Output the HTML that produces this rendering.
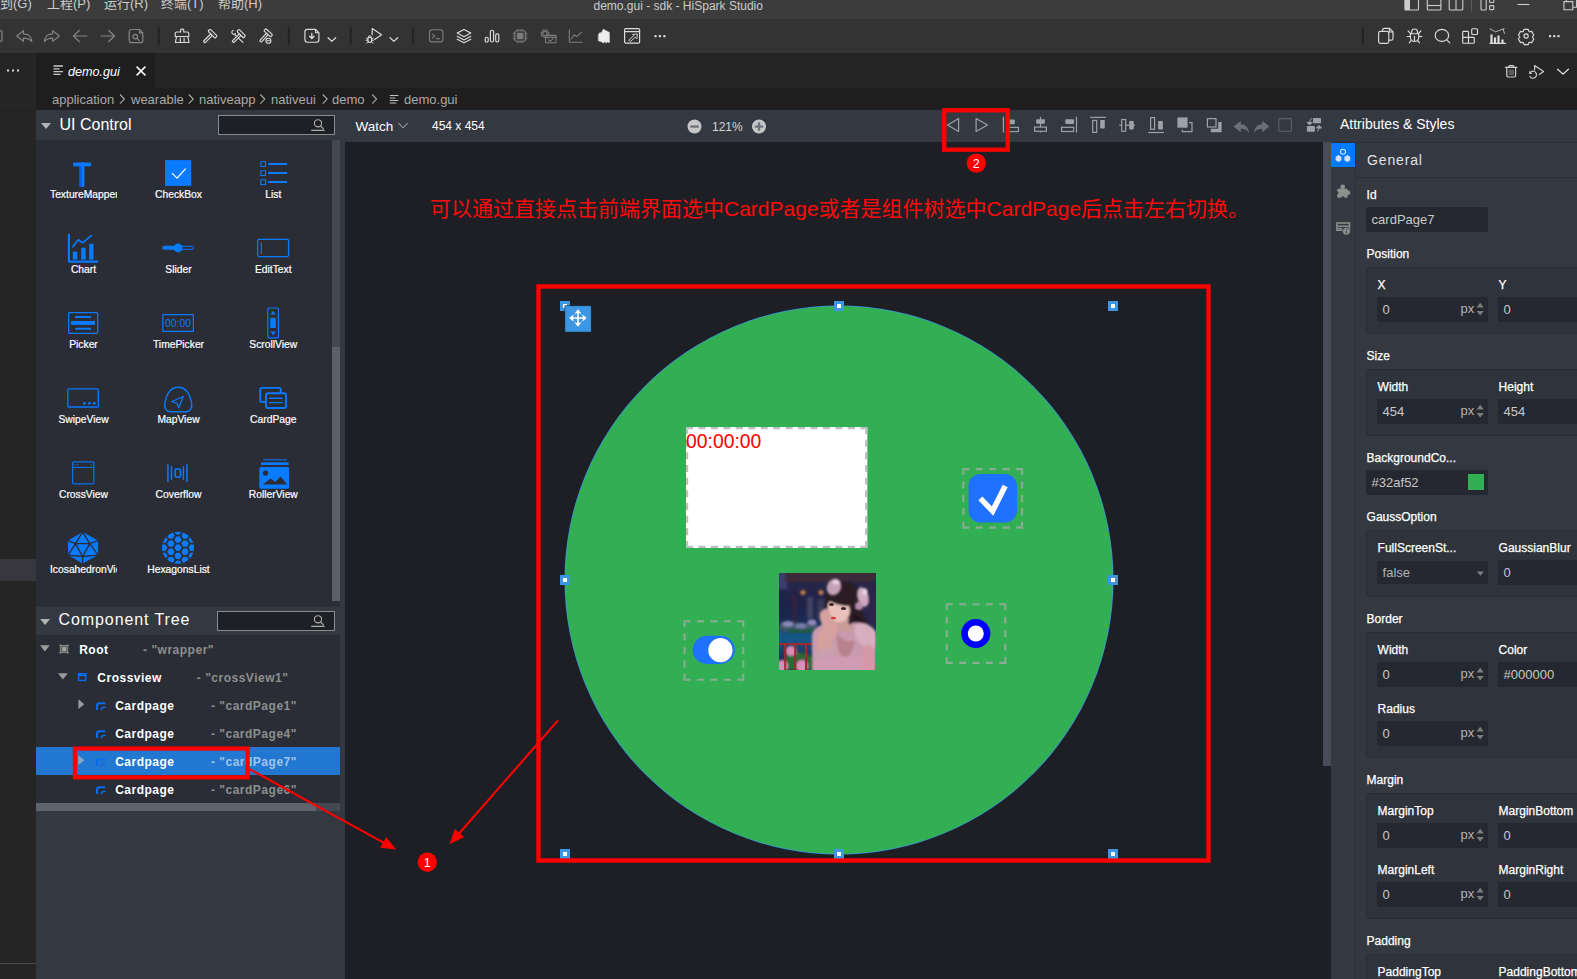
<!DOCTYPE html>
<html lang="zh">
<head>
<meta charset="utf-8">
<title>demo.gui - sdk - HiSpark Studio</title>
<style>
*{box-sizing:border-box;margin:0;padding:0}
html,body{width:1577px;height:979px;overflow:hidden;background:#1d1f24}
body{position:relative;font-family:"Liberation Sans","Noto Sans CJK SC",sans-serif;color:#fff;font-size:12px}
.abs{position:absolute}
#titlebar{left:0;top:0;width:1577px;height:19px;background:#3c3c3c;z-index:2}
#toolbar{left:0;top:18px;width:1577px;height:35px;background:#333333}
#strip{left:0;top:53px;width:36px;height:926px;background:#252526}
#tabbar{left:36px;top:53px;width:1541px;height:35px;background:#252526}
#tab{left:36px;top:53px;width:119px;height:35px;background:#1e1e1e}
#crumbs{left:36px;top:88px;width:1541px;height:22px;background:#1e1e1e}
#edhead{left:36px;top:110px;width:1541px;height:32px;background:#343841}
#leftpanel{left:36px;top:140px;width:304px;height:467px;background:#2a2d35}
#leftgap{left:340px;top:142px;width:5px;height:837px;background:#343841}
#canvas{left:345px;top:142px;width:978px;height:837px;background:#1d1f24}
#cscroll{left:1323px;top:142px;width:8px;height:837px;background:#1d1f24}
#rpanel{left:1331px;top:142px;width:246px;height:837px;background:#343841}
#treehead{left:36px;top:607px;width:304px;height:28px;background:#343841}
#tree{left:36px;top:635px;width:304px;height:168px;background:#2a2d35}
#treebelow{left:36px;top:803px;width:304px;height:176px;background:#343841}
.mtxt{color:#ccc;font-size:13px;top:-7.3px;white-space:nowrap}
.lab{width:67px;height:14px;line-height:14px;overflow:hidden;text-align:center;font-size:10.3px;color:#fff;white-space:nowrap;-webkit-text-stroke:0.2px #fff}
.tn{font-size:12px;font-weight:bold;letter-spacing:.5px;color:#fff;white-space:nowrap;line-height:14px}
.rl{font-size:12px;line-height:14px;color:#fff;white-space:nowrap;-webkit-text-stroke:0.25px #fff}
.gb{width:240px;background:#2f333b;border:1px solid #292c34;border-radius:3px}
.in{background:#252830;border-radius:2px}
.v{font-size:13px;line-height:15px;color:#c9c9c9;white-space:nowrap}
.u{font-size:13px;line-height:15px;color:#b4b4b4}
.dsh{width:60.8px;height:60.6px;border:2px dashed rgba(170,170,170,.72)}
</style>
</head>
<body>

<!-- ===== title bar ===== -->
<div id="titlebar" class="abs">
  <span class="abs mtxt" style="left:-13px">转到(G)</span>
  <span class="abs mtxt" style="left:47px">工程(P)</span>
  <span class="abs mtxt" style="left:104px">运行(R)</span>
  <span class="abs mtxt" style="left:161px">终端(T)</span>
  <span class="abs mtxt" style="left:218px">帮助(H)</span>
  <span class="abs" style="left:593.5px;top:-1px;font-size:12px;color:#ccc;white-space:nowrap">demo.gui - sdk - HiSpark Studio</span>
  <svg class="abs" style="left:1400px;top:0" width="177" height="18" viewBox="1400 0 177 18" fill="none" stroke="#ccc" stroke-width="1.1">
    <rect x="1404.9" y="-4" width="13.6" height="14" rx="1"/><rect x="1405" y="-4" width="5" height="14" fill="#ccc" stroke="none"/>
    <rect x="1427.3" y="-4" width="13.6" height="14" rx="1"/><path d="M1427.3 5.5h13.6"/>
    <rect x="1449.2" y="-4" width="13.6" height="14" rx="1"/><path d="M1456 -4v14"/>
    <path d="M1471.5 0v11.5" stroke="#5a5a5a"/>
    <rect x="1481" y="-4" width="5.2" height="14" rx="1"/><rect x="1489.6" y="-1.5" width="4.2" height="4" rx="0.8"/><rect x="1489.6" y="5.6" width="4.2" height="4" rx="0.8"/>
    <path d="M1517.5 4.5h12"/>
    <path d="M1563.9 1.6h8.9v8.1h-8.9zM1566.4 1.6v-3M1572.8 7.2h3.7v-9"/>
  </svg>
</div>
<!-- ===== main toolbar ===== -->
<div id="toolbar" class="abs">
<svg class="abs" style="left:0;top:0" width="1577" height="35" viewBox="0 18 1577 35" fill="none" stroke-linecap="round" stroke-linejoin="round">
  <g stroke="#858585" stroke-width="1.2">
    <path d="M-4 31.5a5 5 0 0 1 6 0v9a5 5 0 0 1-6 0z"/>
    <path d="M16.8 36l6.6-5.4v3.2c5 0 8.2 3.2 8.4 7.8c-2-2.6-4.6-3.4-8.4-3.4v3.2z"/>
    <path d="M59.3 36l-6.6-5.4v3.2c-5 0-8.2 3.2-8.4 7.8c2-2.6 4.6-3.4 8.4-3.4v3.2z"/>
    <path d="M87 36H73.6M79.5 30.3L73.5 36l6 5.7"/>
    <path d="M101 36h13.4M108.5 30.3l6 5.7l-6 5.7"/>
    <path d="M139.5 29.5h-8a2.3 2.3 0 0 0-2.3 2.3v8.6a2.3 2.3 0 0 0 2.3 2.3h9a2.3 2.3 0 0 0 2.3-2.3v-7.6zM139.5 29.5v3.3h3.3"/>
    <circle cx="135.3" cy="36.6" r="2.3"/><path d="M137 38.4l2.2 2.2"/>
  </g>
  <g stroke="#232323" stroke-width="2" stroke-linecap="butt">
    <path d="M158.8 27.3v17.2M288.9 27.3v17.2M350.7 27.3v17.2M412.9 27.3v17.2M1362.9 27.3v17.2"/>
  </g>
  <g stroke="#dcdcdc" stroke-width="1.15">
    <!-- broom -->
    <path d="M180.7 32v-2.1a0.7 0.7 0 0 1 .7-.7h1.6a.7.7 0 0 1 .7.7v2.1h3.6a1.5 1.5 0 0 1 1.5 1.5v3h-13.6v-3a1.5 1.5 0 0 1 1.5-1.5z"/>
    <path d="M176.5 36.6l-1.1 5.9h13.6l-1.1-5.9M180.3 38v4.5M184.1 38v4.5"/>
    <!-- hammer -->
    <g transform="translate(212.6 33.6) rotate(45)"><rect x="-5" y="-1.5" width="10" height="3" rx="0.9"/><rect x="-1.1" y="1.5" width="2.2" height="10.6" rx="0.9"/></g>
    <!-- hammer + wrench -->
    <path d="M234.4 34.4l8.6 8" stroke-width="1.1"/><path d="M233.3 30.3a2.1 2.1 0 1 0 2.3 3.3" stroke-width="1.1"/>
    <g transform="translate(241.2 33.6) rotate(45)"><rect x="-4.6" y="-1.5" width="9.2" height="3" rx="0.9" fill="#333"/><rect x="-1.1" y="1.5" width="2.2" height="10.4" rx="0.9" fill="#333"/></g>
    <!-- hammer + stop -->
    <g transform="translate(268.2 32.8) rotate(42)"><rect x="-4.6" y="-1.5" width="9.2" height="3" rx="0.9"/><rect x="-1.1" y="1.5" width="2.2" height="10.2" rx="0.9"/></g>
    <circle cx="268.4" cy="40.7" r="2.5" fill="#333"/><path d="M267 40.7h2.8"/>
    <!-- download file -->
    <path d="M315.6 29.4h-8.3a2.4 2.4 0 0 0-2.4 2.4v8a2.4 2.4 0 0 0 2.4 2.4h9.2a2.4 2.4 0 0 0 2.4-2.4v-7.1zM315.6 29.4v3.3h3.3"/>
    <path d="M311.8 33.5v4.4M309.6 36.3l2.2 2.2l2.2-2.2" stroke-width="1.3"/>
    <path d="M328.1 37.7l3.8 3.7l3.8-3.7" stroke-width="1.2"/>
    <!-- debug run -->
    <path d="M372.2 28.6l9.4 6.2l-7 4.6M372.2 28.6v6"/>
    <ellipse cx="369.8" cy="39.8" rx="2" ry="2.7"/><path d="M368.4 36.6a1.5 1.5 0 0 1 2.8 0M366.3 38.2l1.5.8M373.3 38.2l-1.5.8M366 40.3h1.8M373.6 40.3h-1.8M366.5 43.2l1.6-1.3M373.1 43.2l-1.6-1.3" stroke-width="0.9"/>
    <path d="M390.1 37.7l3.8 3.7l3.8-3.7" stroke-width="1.2"/>
  </g>
  <!-- terminal (dim) -->
  <g stroke="#7c7c7c" stroke-width="1.15">
    <rect x="429.5" y="29.7" width="13.4" height="12.2" rx="2.6"/><path d="M432.5 34.2l2.4 1.9l-2.4 1.9M436.3 38.6h3.2"/>
  </g>
  <g stroke="#dcdcdc" stroke-width="1.15">
    <!-- layers -->
    <path d="M464 29.5l6.8 3.6l-6.8 3.6l-6.8-3.6zM457.2 36.3l6.8 3.6l6.8-3.6M457.2 39.2l6.8 3.6l6.8-3.6"/>
    <!-- bars -->
    <rect x="485.2" y="37.2" width="3" height="4.8" rx="1.3"/><rect x="490.4" y="30.2" width="3.2" height="11.8" rx="1.5"/><rect x="495.7" y="33.8" width="3.1" height="8.2" rx="1.4"/>
  </g>
  <g stroke="#7c7c7c" stroke-width="1.1">
    <!-- chip -->
    <rect x="514.8" y="30.7" width="10.6" height="10.6" rx="2.2"/><rect x="517.3" y="33.2" width="5.6" height="5.6" fill="#7c7c7c"/>
    <path d="M517.5 29.2v1.5M520.1 29.2v1.5M522.7 29.2v1.5M517.5 41.3v1.5M520.1 41.3v1.5M522.7 41.3v1.5M513.3 33.4h1.5M513.3 36h1.5M513.3 38.6h1.5M525.4 33.4h1.5M525.4 36h1.5M525.4 38.6h1.5"/>
    <!-- gear window -->
    <circle cx="545" cy="33.6" r="2.2"/><circle cx="545" cy="33.6" r="3.8" stroke-dasharray="1.6 1.4"/>
    <rect x="545.6" y="35.4" width="10.4" height="7.4" fill="#333"/><path d="M545.6 37.4h10.4M548.8 39.9l1.4 1.4l2.6-2.4"/>
    <!-- line chart -->
    <path d="M569.3 29.8v12.4h13M571 39l3.4-4.2l2.4 1.8l4.8-4.4"/>
  </g>
  <!-- flame/building -->
  <path d="M598.5 34.4l1.7-2.2l.9 1.6l2.1-4.6l6.2 3.2v10.3l-1.7-.9l-1.3 1.2l-1.4-1.2l-1.9 1.2l-1.5-1.2l-3.1-1z" fill="#eeeeee" stroke="#eeeeee" stroke-width="0.5"/>
  <g stroke="#dcdcdc" stroke-width="1.2">
    <!-- window arrow -->
    <rect x="624.6" y="28.7" width="15" height="14.4" rx="1.2"/><path d="M624.6 31.7h15"/>
    <path d="M637 34l-4.5.4l1.3 1.3l-5 4.4l1.5 1.5l5-4.4l1.3 1.3z" stroke-width="0.9"/>
  </g>
  <g fill="#e4e4e4"><rect x="654.5" y="35.1" width="2.1" height="2.1"/><rect x="658.9" y="35.1" width="2.1" height="2.1"/><rect x="663.3" y="35.1" width="2.1" height="2.1"/>
     <rect x="1549" y="35.1" width="2.1" height="2.1"/><rect x="1553.2" y="35.1" width="2.1" height="2.1"/><rect x="1557.4" y="35.1" width="2.1" height="2.1"/></g>
  <!-- right group -->
  <g stroke="#dcdcdc" stroke-width="1.15">
    <!-- copy -->
    <path d="M1382.6 31.4v-1.2a1.8 1.8 0 0 1 1.8-1.8h5.2l3.4 3.4v6.6a1.8 1.8 0 0 1-1.8 1.8h-2.4M1389.4 28.6v3.4h3.4"/>
    <rect x="1378.6" y="31.4" width="10.2" height="12" rx="1.8"/>
    <!-- bug -->
    <path d="M1410.4 33.7h8.4v3.6a4.2 4.2 0 0 1-8.4 0zM1411.7 33.6v-1.7a2.9 2.9 0 0 1 5.8 0v1.7M1414.5 36.4v4.8"/>
    <path d="M1408.1 31l2.6 2.7M1420.9 31l-2.6 2.7M1407.1 36.5h3.3M1421.8 36.5h-3.3M1409.3 42.9l2.1-2.7M1419.5 42.9l-2.1-2.7"/>
    <!-- search -->
    <ellipse cx="1441.9" cy="35.4" rx="6.7" ry="6"/><path d="M1446.5 39.7l3.3 3.2"/>
    <!-- extensions -->
    <path d="M1462.7 32.2a.8.8 0 0 1 .8-.8h4.2a.8.8 0 0 1 .8.8v5.2h5a.8.8 0 0 1 .8.8v4.2a.8.8 0 0 1-.8.8h-10a.8.8 0 0 1-.8-.8zM1462.7 37.4h5.8v5.8"/>
    <rect x="1471.7" y="28.7" width="5.8" height="5.8" rx="1"/>
    <!-- chart -->
    <path d="M1490 43.3h15.6" />
    <path d="M1491.5 34.5v8.8M1495 37.5v5.8M1498.5 35.5v7.8M1502.5 39.5v3.8" stroke-width="2.2" stroke-linecap="butt"/>
    <path d="M1490 28.8l5.4 3l3 -1l5.8-2M1503 29l1.6 5" stroke-width="0.8" stroke-dasharray="2 0.8"/>
    <!-- gear -->
    <circle cx="1526.1" cy="36" r="2.1"/>
    <path d="M1524 29.4h4.2l1 2.3l2.5-.3l2.1 3.6l-1.5 2l1.5 2l-2.1 3.6l-2.5-.3l-1 2.3h-4.2l-1-2.3l-2.5.3l-2.1-3.6l1.5-2l-1.5-2l2.1-3.6l2.5.3z" stroke-linejoin="round"/>
  </g>
</svg>
</div>
<!-- ===== left strip ===== -->
<div id="strip" class="abs">
  <div class="abs" style="left:0;top:57px;width:36px;height:1px;background:#202021"></div>
  <div class="abs" style="left:0;top:506px;width:36px;height:22px;background:#37373d"></div>
  <div class="abs" style="left:0;top:910px;width:36px;height:1px;background:#4b4b4b"></div>
  <svg class="abs" style="left:0;top:0" width="36" height="35"><g fill="#d8d8d8"><rect x="7" y="16.5" width="2" height="2"/><rect x="12" y="16.5" width="2" height="2"/><rect x="17" y="16.5" width="2" height="2"/></g></svg>
</div>
<!-- ===== tab bar ===== -->
<div id="tabbar" class="abs">
  <svg class="abs" style="left:1464px;top:0" width="77" height="35" viewBox="1500 53 77 35" fill="none" stroke="#d0d0d0" stroke-width="1.1" stroke-linecap="round" stroke-linejoin="round">
    <path d="M1505.4 67.4h11.4M1508.4 67.4l.8-1.8h4l.8 1.8M1506.8 67.6v8a1.4 1.4 0 0 0 1.4 1.4h6a1.4 1.4 0 0 0 1.4-1.4v-8" stroke-width="1.2"/>
    <rect x="1508.6" y="69.6" width="5.4" height="5.6" fill="#5c5c5c" stroke="none"/>
    <path d="M1534.6 70v-4.4l9 5.8l-4.4 3.1" stroke-width="1.2"/>
    <path d="M1530 76.5A3.5 3.5 0 1 0 1530.7 72.1" stroke-width="1.2"/><path d="M1529.2 70.8v3.3h3.2z" fill="#d0d0d0" stroke="none"/>
    <path d="M1557.6 69.2l5.4 4.9l5.4-4.9" stroke="#e4e8f0" stroke-width="1.2"/>
  </svg>
</div>
<div id="tab" class="abs">
  <svg class="abs" style="left:17px;top:12px" width="11" height="11" viewBox="0 0 11 11" stroke="#c8c8c8" stroke-width="1.3"><path d="M0.5 1h9.5M0.5 3.8h6M0.5 6.6h9.5M0.5 9.4h7"/></svg>
  <span class="abs" style="left:32px;top:11.5px;font-size:12.6px;font-style:italic;color:#fff;white-space:nowrap">demo.gui</span>
  <svg class="abs" style="left:100px;top:13px" width="10" height="10" viewBox="0 0 10 10" stroke="#fff" stroke-width="1.5"><path d="M0.6 0.6l8.8 8.8M9.4 0.6l-8.8 8.8"/></svg>
</div>
<!-- ===== breadcrumbs ===== -->
<div id="crumbs" class="abs" style="font-size:13px;color:#a9a9a9;white-space:nowrap">
  <span class="abs" style="left:16px;top:4px">application</span>
  <span class="abs" style="left:95px;top:4px">wearable</span>
  <span class="abs" style="left:163px;top:4px">nativeapp</span>
  <span class="abs" style="left:235px;top:4px">nativeui</span>
  <span class="abs" style="left:296px;top:4px">demo</span>
  <span class="abs" style="left:368px;top:4px">demo.gui</span>
  <svg class="abs" style="left:0;top:0" width="440" height="22" viewBox="36 88 440 22" fill="none" stroke="#a9a9a9" stroke-width="1.1"><path d="M120 94.5l4.4 4.6l-4.4 4.6M188.8 94.5l4.4 4.6l-4.4 4.6M260.4 94.5l4.4 4.6l-4.4 4.6M322.8 94.5l4.4 4.6l-4.4 4.6M372.2 94.5l4.4 4.6l-4.4 4.6"/>
  <path d="M389.8 95.5h8.5M389.8 98h5.5M389.8 100.5h8.5M389.8 103h6.5" stroke="#c0c0c0" stroke-width="1.2"/></svg>
</div>

<!-- ===== editor header ===== -->
<div id="edhead" class="abs">
  <svg class="abs" style="left:0;top:0" width="1541" height="32" viewBox="36 110 1541 32" fill="none">
    <path d="M41 123h10l-5 6z" fill="#b4b4b4"/>
    <rect x="218.5" y="115.5" width="116" height="19" fill="#1e2025" stroke="#8a8a8a"/>
    <circle cx="318" cy="123.3" r="3.6" stroke="#b0b0b0" stroke-width="1.1"/><path d="M320.6 126l3 3.2M311.2 130.4h13.4" stroke="#b0b0b0" stroke-width="1.1"/>
    <path d="M398.5 123.2l4.6 4.6l4.6-4.6" stroke="#9a9a9a" stroke-width="1.1"/>
    <circle cx="694.5" cy="126.5" r="7" fill="#c6c6c8"/><rect x="690.3" y="125.4" width="8.4" height="2.3" fill="#70737c"/>
    <circle cx="759" cy="126.5" r="7" fill="#c6c6c8"/><rect x="754.8" y="125.4" width="8.4" height="2.3" fill="#70737c"/><rect x="757.9" y="122.3" width="2.3" height="8.4" fill="#70737c"/>
  </svg>

  <svg class="abs" style="left:894px;top:0" width="400" height="32" viewBox="930 110 400 32" fill="none" stroke="#a0a1a6" stroke-width="1.2">
    <path d="M958.6 118.6v12.8l-11-6.4z" stroke-linejoin="round"/>
    <path d="M976.1 118.6v12.8l11.4-6.4z" stroke-linejoin="round"/>
    <path d="M1003.4 116.8v15.8"/>
    <rect x="1006" y="119.4" width="8.8" height="4.8" rx="0.8" fill="#a0a1a6" stroke="none"/><rect x="1006.6" y="127.4" width="11.8" height="4.2"/>
    <path d="M1040.5 116.8v15.8"/>
    <rect x="1036.2" y="119.2" width="8.7" height="4.6" rx="0.8" fill="#a0a1a6" stroke="none"/><rect x="1034.6" y="127.1" width="11.8" height="4.2" fill="#343841"/>
    <path d="M1076.5 116.8v15.8"/>
    <rect x="1065.3" y="119.2" width="8.7" height="4.7" rx="0.8" fill="#a0a1a6" stroke="none"/><rect x="1061.6" y="127.3" width="12" height="4.2"/>
    <path d="M1090.2 117.4h15.7"/>
    <rect x="1092.7" y="120.4" width="4" height="12"/><rect x="1100.2" y="120" width="4.6" height="8.6" rx="0.8" fill="#a0a1a6" stroke="none"/>
    <path d="M1119.3 125.2h15.6"/>
    <rect x="1121.7" y="119.5" width="4" height="11.7" fill="#343841"/><rect x="1129.2" y="121" width="4.6" height="8.6" rx="0.8" fill="#a0a1a6" stroke="none"/>
    <path d="M1148.2 132.5h15.8"/>
    <rect x="1150.6" y="117.6" width="4" height="11.7"/><rect x="1158.1" y="121" width="4.8" height="8.6" rx="0.8" fill="#a0a1a6" stroke="none"/>
    <rect x="1177.4" y="117.4" width="10.2" height="10.3" fill="#a0a1a6" stroke="none"/><path d="M1189.1 122.6h2.9v9.1h-9.7v-2.2"/>
    <rect x="1207.4" y="118.6" width="8.6" height="8.4"/><path d="M1218.2 122h3.4v10.3h-10.8v-3.5h7.4z" fill="#a0a1a6" stroke="none"/>
    <path d="M1233.6 126.6l7.2-5.8v3.4c5 .2 7.8 3.6 8.2 8.6c-1.8-2.8-4.4-4-8.2-4v3.4z" fill="#6c6f76" stroke="none"/>
    <path d="M1269.4 126.6l-7.2-5.8v3.4c-5 .2-7.8 3.6-8.2 8.6c1.8-2.8 4.4-4 8.2-4v3.4z" fill="#6c6f76" stroke="none"/>
    <rect x="1278.8" y="118.6" width="12.6" height="12.6" rx="1" stroke="#5e6169" stroke-width="1.1"/>
    <rect x="1313" y="118" width="8" height="5.2" rx="0.6" fill="#a0a1a6" stroke="none"/><rect x="1306.9" y="126" width="8" height="5.7" rx="0.6" fill="#a0a1a6" stroke="none"/>
    <path d="M1311.4 118.2c-1 1.4-1.6 2.8-1.7 4.4M1307 122.4h5.2l-2.6 2.6z" stroke-width="1" /><path d="M1307 122.3h5.2l-2.6 2.7z" fill="#a0a1a6" stroke="none"/>
    <path d="M1317.4 131.6c1-1.4 1.6-2.6 1.7-4M1316.4 128h5.2l-2.6-2.6z" stroke-width="1"/><path d="M1316.4 128h5.2l-2.6-2.7z" fill="#a0a1a6" stroke="none"/>
  </svg>
  <span class="abs" style="left:23.5px;top:5.5px;font-size:16px;color:#fff;white-space:nowrap">UI Control</span>
  <span class="abs" style="left:319.5px;top:9px;font-size:13.5px;color:#fff;white-space:nowrap">Watch</span>
  <span class="abs" style="left:396px;top:9px;font-size:12px;color:#fff;white-space:nowrap">454 x 454</span>
  <span class="abs" style="left:676px;top:9.5px;font-size:12px;color:#d4d4d4;white-space:nowrap">121%</span>
  <span class="abs" style="left:1304px;top:6.1px;font-size:14px;color:#fff;white-space:nowrap">Attributes &amp; Styles</span>
</div>
<!-- ===== UI control panel ===== -->
<div id="leftpanel" class="abs">
  <div class="abs" style="left:296px;top:0;width:8px;height:461px;background:#434852"></div>
  <div class="abs" style="left:296px;top:206.7px;width:8px;height:254.2px;background:#5a5f69"></div>
  <svg class="abs" style="left:0;top:0" width="296" height="463" viewBox="36 140 296 463" fill="none" stroke-linejoin="round">
    <!-- TextureMapper -->
    <rect x="73.2" y="162.6" width="17.9" height="3.7" fill="#0a7bff"/><rect x="79.5" y="162.6" width="4.9" height="24.2" fill="#0a7bff"/><rect x="79.5" y="166" width="2" height="20.8" fill="#0a55e6"/>
    <!-- CheckBox -->
    <rect x="165" y="160.1" width="26.2" height="25.8" fill="#0a7bff"/><path d="M171.9 173.1l5.2 5l8.5-9.5" stroke="#fff" stroke-width="1.3"/>
    <!-- List -->
    <g stroke="#0a7bff"><rect x="260.8" y="161.8" width="4.7" height="4.7" stroke-width="1.1"/><rect x="260.8" y="170.8" width="4.7" height="4.7" stroke-width="1.1"/><rect x="260.8" y="179.8" width="4.7" height="4.7" stroke-width="1.1"/>
    <path d="M268.2 164.1h19M268.2 173.1h19M268.2 182.1h19" stroke-width="2"/></g>
    <!-- Chart -->
    <path d="M68.9 234v27.6h29.2" stroke="#0a7bff" stroke-width="2.1"/><rect x="72.8" y="251.6" width="4.5" height="8" fill="#0a7bff"/><rect x="81.2" y="247.7" width="4.5" height="11.9" fill="#0a7bff"/><rect x="89.2" y="243.8" width="4.3" height="15.8" fill="#0a7bff"/>
    <path d="M72.5 247.3l5.7-7.6l4.4 3.2l9.2-7.7" stroke="#0a7bff" stroke-width="1.7"/>
    <!-- Slider -->
    <rect x="162.2" y="245.8" width="16" height="4" rx="2" fill="#0a7bff"/><rect x="177" y="246.3" width="16.6" height="3" rx="1.5" stroke="#0a7bff" stroke-width="1"/><circle cx="178.1" cy="247.8" r="4.4" fill="#0a7bff"/>
    <!-- EditText -->
    <rect x="257.6" y="239.4" width="31" height="17.2" rx="1.5" stroke="#0a7bff" stroke-width="1.3"/><path d="M261.4 242.2v11.8" stroke="#0a7bff" stroke-width="1.1"/>
    <!-- Picker -->
    <rect x="68.7" y="312.7" width="29" height="20.6" rx="1" stroke="#0a7bff" stroke-width="1.3"/><path d="M75.2 317h15.8M75.2 328.8h15.8" stroke="#0a7bff" stroke-width="2"/><rect x="71.1" y="321" width="23.9" height="3.9" fill="#0a7bff"/>
    <!-- TimePicker -->
    <rect x="162.8" y="314.7" width="30.6" height="16.6" stroke="#0a7bff" stroke-width="1.2"/>
    <!-- ScrollView -->
    <rect x="267.8" y="308" width="10.6" height="29.8" rx="1" stroke="#0a7bff" stroke-width="1.2"/><path d="M273.1 310.7l2.7 3.9h-5.4zM273.1 335.5l2.7-4.1h-5.4z" fill="#0a7bff"/><rect x="270.3" y="317.8" width="5.5" height="10.2" fill="#0a7bff"/>
    <!-- SwipeView -->
    <rect x="67.8" y="388.8" width="30.5" height="18.2" rx="1" stroke="#0a7bff" stroke-width="1.3"/><circle cx="84.4" cy="403.3" r="1.4" fill="#0a7bff"/><circle cx="89.4" cy="403.3" r="1.4" fill="#0a7bff"/><circle cx="94.3" cy="403.3" r="1.4" fill="#0a7bff"/>
    <!-- MapView -->
    <path d="M178.2 387.2c-7.6 0-11.6 6.4-13.4 16c-1 5 1.6 8.5 5.6 8.5h15.6c4 0 6.6-3.5 5.6-8.5c-1.8-9.6-5.8-16-13.4-16z" stroke="#0a7bff" stroke-width="1.4"/>
    <path d="M171.8 401.5l11.5-5l-4.6 11.3l-1.9-4.7z" stroke="#0a7bff" stroke-width="1.3"/>
    <!-- CardPage -->
    <rect x="260.2" y="387.9" width="20.6" height="14" rx="2" stroke="#0a7bff" stroke-width="1.9"/><rect x="266" y="393.2" width="20" height="14.8" rx="2" fill="#2a2d35" stroke="#0a7bff" stroke-width="1.9"/><path d="M269 398.2h13.4M269 402.6h13.4" stroke="#0a7bff" stroke-width="1.4"/>
    <!-- CrossView -->
    <rect x="72.6" y="461.8" width="21.2" height="22" rx="1" stroke="#0b6fe8" stroke-width="1.3"/><path d="M72.6 467.4h21.2" stroke="#0b6fe8" stroke-width="1.1"/><path d="M74.5 464.6h1.2M77 464.6h1.2M90.4 464.6h1.2" stroke="#0b6fe8" stroke-width="1.1"/>
    <!-- Coverflow -->
    <path d="M167.9 464.2v17.8M187 464.2v17.8M171.5 466.3v13.5M183.4 466.3v13.5" stroke="#0a7bff" stroke-width="1.5"/><rect x="175.1" y="469" width="5.4" height="8.2" rx="1.6" stroke="#0a7bff" stroke-width="1.6"/>
    <!-- RollerView -->
    <path d="M263.4 459.8h23.4" stroke="#0a7bff" stroke-width="1"/><path d="M261 463.7h27.6" stroke="#0a7bff" stroke-width="2.6"/><rect x="259.3" y="466.9" width="29.8" height="21.8" rx="1.5" fill="#0a7bff"/>
    <circle cx="265.5" cy="473.1" r="2.7" fill="#2a2d35"/><path d="M262.8 484.6l8-6.2l4.5 3.6l5.3-5.4l6.6 8z" fill="#2a2d35"/>
    <!-- Icosahedron -->
    <path d="M82.6 532l15.5 8.6v14.5l-15.5 8.5l-14.5-8.5v-14.5z" fill="#0a7bff"/>
    <path d="M82.6 532l-7.1 11.6h14.3zM75.5 543.6l7.1 12.9l7.2-12.9M68.1 540.6l7.4 3l-7.4 11.5M98.1 540.6l-8.3 3l8.3 11.5M68.1 555.1l14.5 1.4l15.5-1.4M82.6 556.5v7.1" stroke="#2a2d35" stroke-width="1.4"/>
    <!-- HexagonsList -->
    <clipPath id="hc"><circle cx="178" cy="547.7" r="16"/></clipPath>
    <circle cx="178" cy="547.7" r="16" fill="#0a7bff"/><path d="M168.6 539.6L166.2 543.6L161.6 543.6L159.2 539.6L161.6 535.5L166.2 535.5ZM168.6 547.7L166.2 551.8L161.6 551.8L159.2 547.7L161.6 543.6L166.2 543.6ZM168.6 555.8L166.2 559.9L161.6 559.9L159.2 555.8L161.6 551.8L166.2 551.8ZM175.6 535.5L173.3 539.6L168.6 539.6L166.2 535.5L168.6 531.4L173.3 531.4ZM175.6 543.6L173.3 547.7L168.6 547.7L166.2 543.6L168.6 539.6L173.3 539.6ZM175.6 551.8L173.3 555.8L168.6 555.8L166.2 551.8L168.6 547.7L173.3 547.7ZM175.6 559.9L173.3 564.0L168.6 564.0L166.2 559.9L168.6 555.8L173.3 555.8ZM182.7 531.4L180.3 535.5L175.7 535.5L173.3 531.4L175.7 527.3L180.3 527.3ZM182.7 539.6L180.3 543.6L175.7 543.6L173.3 539.6L175.7 535.5L180.3 535.5ZM182.7 547.7L180.3 551.8L175.7 551.8L173.3 547.7L175.7 543.6L180.3 543.6ZM182.7 555.8L180.3 559.9L175.7 559.9L173.3 555.8L175.7 551.8L180.3 551.8ZM182.7 564.0L180.3 568.1L175.7 568.1L173.3 564.0L175.7 559.9L180.3 559.9ZM189.8 535.5L187.4 539.6L182.7 539.6L180.4 535.5L182.7 531.4L187.4 531.4ZM189.8 543.6L187.4 547.7L182.7 547.7L180.4 543.6L182.7 539.6L187.4 539.6ZM189.8 551.8L187.4 555.8L182.7 555.8L180.4 551.8L182.7 547.7L187.4 547.7ZM189.8 559.9L187.4 564.0L182.7 564.0L180.4 559.9L182.7 555.8L187.4 555.8ZM196.8 539.6L194.4 543.6L189.8 543.6L187.4 539.6L189.8 535.5L194.4 535.5ZM196.8 547.7L194.4 551.8L189.8 551.8L187.4 547.7L189.8 543.6L194.4 543.6ZM196.8 555.8L194.4 559.9L189.8 559.9L187.4 555.8L189.8 551.8L194.4 551.8Z" stroke="#2a2d35" stroke-width="1.8" clip-path="url(#hc)"/>
  </svg>
  <div class="abs" style="left:126.5px;top:176.5px;width:31px;text-align:center;font-size:10.4px;color:#0a7bff;line-height:14px">00:00</div>
<div class="abs lab" style="left:14px;top:48.19999999999999px">TextureMapper</div>
<div class="abs lab" style="left:109px;top:48.19999999999999px">CheckBox</div>
<div class="abs lab" style="left:203.8px;top:48.19999999999999px">List</div>
<div class="abs lab" style="left:14px;top:123.39999999999998px">Chart</div>
<div class="abs lab" style="left:109px;top:123.39999999999998px">Slider</div>
<div class="abs lab" style="left:203.8px;top:123.39999999999998px">EditText</div>
<div class="abs lab" style="left:14px;top:198.2px">Picker</div>
<div class="abs lab" style="left:109px;top:198.2px">TimePicker</div>
<div class="abs lab" style="left:203.8px;top:198.2px">ScrollView</div>
<div class="abs lab" style="left:14px;top:273.4px">SwipeView</div>
<div class="abs lab" style="left:109px;top:273.4px">MapView</div>
<div class="abs lab" style="left:203.8px;top:273.4px">CardPage</div>
<div class="abs lab" style="left:14px;top:348.2px">CrossView</div>
<div class="abs lab" style="left:109px;top:348.2px">Coverflow</div>
<div class="abs lab" style="left:203.8px;top:348.2px">RollerView</div>
<div class="abs lab" style="left:14px;top:423.4px">IcosahedronView</div>
<div class="abs lab" style="left:109px;top:423.4px">HexagonsList</div>
</div>
<div id="leftgap" class="abs"></div>

<!-- ===== component tree ===== -->
<div id="treehead" class="abs">
  <svg class="abs" style="left:0;top:0" width="304" height="28" viewBox="36 607 304 28" fill="none">
    <path d="M40.2 619h9.8l-4.9 5.9z" fill="#b4b4b4"/>
    <rect x="217.5" y="611.5" width="117" height="19" fill="#1e2025" stroke="#8a8a8a"/>
    <circle cx="318" cy="619.3" r="3.6" stroke="#b0b0b0" stroke-width="1.1"/><path d="M320.6 622l3 3.2M311.2 626.4h13.4" stroke="#b0b0b0" stroke-width="1.1"/>
  </svg>
  <span class="abs" style="left:22.6px;top:4px;font-size:16px;letter-spacing:0.9px;color:#fff;white-space:nowrap">Component Tree</span>
</div>
<div id="tree" class="abs">
  <div class="abs" style="left:0;top:112px;width:304px;height:28px;background:#2277d0"></div>
  <svg class="abs" style="left:0;top:0" width="304" height="168" viewBox="36 635 304 168" fill="none">
    <path d="M40 645.2h9.8l-4.9 6.3z" fill="#9a9a9a"/>
    <path d="M58 673.2h9.8l-4.9 6.3z" fill="#9a9a9a"/>
    <path d="M78.4 699.3l5.9 4.9l-5.9 4.9z" fill="#9a9a9a"/>
    <path d="M78.4 755.3l5.9 4.9l-5.9 4.9z" fill="#8aa8c8"/>
    <rect x="60.4" y="645.5" width="7.3" height="7.1" fill="#666668"/><path d="M60.4 644.3v9.6M67.7 644.3v9.6M59.2 645.5h9.8M59.2 652.6h9.8" stroke="#858587" stroke-width="1"/><rect x="62.3" y="647.1" width="3.7" height="3.9" fill="#a6a6a6"/>
    <rect x="78.6" y="673.8" width="7.1" height="6.6" stroke="#0a6cf0" stroke-width="1.4"/><rect x="77.9" y="673.1" width="8.5" height="3.1" fill="#0a6cf0"/><path d="M81.6 674.4h3" stroke="#1b3f86" stroke-width="0.8"/>
    <path d="M97 710v-4.3a2.5 2.5 0 0 1 2.5-2.5h5.8" stroke="#0a6cf0" stroke-width="1.9"/><path d="M101.2 710.3c0-2.2 1.4-3 4.2-3" stroke="#0a6cf0" stroke-width="1.5"/><path d="M97 738v-4.3a2.5 2.5 0 0 1 2.5-2.5h5.8" stroke="#0a6cf0" stroke-width="1.9"/><path d="M101.2 738.3c0-2.2 1.4-3 4.2-3" stroke="#0a6cf0" stroke-width="1.5"/><path d="M97 766v-4.3a2.5 2.5 0 0 1 2.5-2.5h5.8" stroke="#0a6cf0" stroke-width="1.9"/><path d="M101.2 766.3c0-2.2 1.4-3 4.2-3" stroke="#0a6cf0" stroke-width="1.5"/><path d="M97 794v-4.3a2.5 2.5 0 0 1 2.5-2.5h5.8" stroke="#0a6cf0" stroke-width="1.9"/><path d="M101.2 794.3c0-2.2 1.4-3 4.2-3" stroke="#0a6cf0" stroke-width="1.5"/>
  </svg>
<span class="abs tn" style="left:43.2px;top:7.8px">Root</span><span class="abs tn" style="left:107.1px;top:7.8px;color:#8e8e8e">- "wrapper"</span>
<span class="abs tn" style="left:61.3px;top:35.8px">Crossview</span><span class="abs tn" style="left:160.8px;top:35.8px;color:#8e8e8e">- "crossView1"</span>
<span class="abs tn" style="left:79.2px;top:63.8px">Cardpage</span><span class="abs tn" style="left:175px;top:63.8px;color:#8e8e8e">- "cardPage1"</span>
<span class="abs tn" style="left:79.2px;top:91.8px">Cardpage</span><span class="abs tn" style="left:175px;top:91.8px;color:#8e8e8e">- "cardPage4"</span>
<span class="abs tn" style="left:79.2px;top:119.8px">Cardpage</span><span class="abs tn" style="left:175px;top:119.8px;color:#a4c4ea">- "cardPage7"</span>
<span class="abs tn" style="left:79.2px;top:147.8px">Cardpage</span><span class="abs tn" style="left:175px;top:147.8px;color:#8e8e8e">- "cardPage6"</span>
</div>
<div id="treebelow" class="abs">
  <div class="abs" style="left:0;top:0;width:304px;height:7.5px;background:#434852"></div>
  <div class="abs" style="left:0;top:0;width:280px;height:7.5px;background:#5e636d"></div>
</div>

<!-- ===== canvas ===== -->
<div id="canvas" class="abs">
<svg class="abs" style="left:0;top:0" width="978" height="837" viewBox="345 142 978 837" fill="none">
  <circle cx="839" cy="580" r="274.5" fill="#3b96e3"/>
  <circle cx="839" cy="580" r="273.8" fill="#32af52"/>
  <!-- time box -->
  <rect x="686" y="427" width="181.3" height="121" fill="#fff"/>
    <!-- dashed frames -->
  <path d="M686 428.10h181.3M686 546.90h181.3" stroke="#bebebe" stroke-width="2.2" stroke-dasharray="7 5.450"/><path d="M687.10 429.2v116.6M866.20 429.2v116.6" stroke="#bebebe" stroke-width="2.2" stroke-dasharray="7 5.667" stroke-dashoffset="2.2"/>
  <path d="M962.3 469.15h60.8M962.3 527.65h60.8" stroke="#8cab95" stroke-width="2.1" stroke-dasharray="7 6.450"/><path d="M963.35 470.20000000000005v56.4M1022.05 470.20000000000005v56.4" stroke="#8cab95" stroke-width="2.1" stroke-dasharray="7 6.400" stroke-dashoffset="2.1"/>
  <path d="M683.5 621.25h60.8M683.5 679.75h60.8" stroke="#8cab95" stroke-width="2.1" stroke-dasharray="7 6.450"/><path d="M684.55 622.3000000000001v56.4M743.25 622.3000000000001v56.4" stroke="#8cab95" stroke-width="2.1" stroke-dasharray="7 6.400" stroke-dashoffset="2.1"/>
  <path d="M945.7 604.25h60.6M945.7 662.85h60.6" stroke="#8cab95" stroke-width="2.1" stroke-dasharray="7 6.400"/><path d="M946.75 605.3000000000001v56.5M1005.25 605.3000000000001v56.5" stroke="#8cab95" stroke-width="2.1" stroke-dasharray="7 6.425" stroke-dashoffset="2.1"/>
  <!-- checkbox -->
    <rect x="968.5" y="474" width="48.5" height="48.5" rx="12" fill="#1f71ff"/>
  <path d="M980.4 498.3l12.2 12.8l12.6-25" stroke="#fff" stroke-width="5.5"/>
  <!-- toggle -->
    <rect x="692.7" y="635.8" width="42" height="28.2" rx="14.1" fill="#1f71ff"/>
  <circle cx="720.4" cy="650.2" r="12.1" fill="#fff"/>
  <!-- radio -->
    <circle cx="975.8" cy="633.5" r="11.3" fill="#fff" stroke="#0000ff" stroke-width="6.6"/>
  <!-- image -->
  <g id="photo" transform="translate(779 573)">
    <defs>
      <clipPath id="pc"><rect x="0" y="0" width="97" height="97"/></clipPath>
      <filter id="b1" x="-20%" y="-20%" width="140%" height="140%"><feGaussianBlur stdDeviation="1"/></filter>
      <filter id="b2" x="-20%" y="-20%" width="140%" height="140%"><feGaussianBlur stdDeviation="1.8"/></filter>
      <filter id="b05" x="-20%" y="-20%" width="140%" height="140%"><feGaussianBlur stdDeviation="0.5"/></filter>
      <linearGradient id="bgv" x1="0" y1="0" x2="0" y2="1"><stop offset="0" stop-color="#2a2748"/><stop offset="0.3" stop-color="#1d2249"/><stop offset="0.55" stop-color="#182a55"/><stop offset="0.7" stop-color="#12507e"/><stop offset="1" stop-color="#2a2040"/></linearGradient>
      <radialGradient id="lan"><stop offset="0" stop-color="#f0b060"/><stop offset="0.4" stop-color="#b87040"/><stop offset="1" stop-color="#703838" stop-opacity="0"/></radialGradient>
    </defs>
    <g clip-path="url(#pc)">
      <rect x="0" y="0" width="97" height="97" fill="url(#bgv)"/>
      <g filter="url(#b2)">
        <rect x="-3" y="-3" width="13" height="19" fill="#3c3c72"/>
        <rect x="6" y="-3" width="95" height="12" fill="#3a2c38"/>
        <rect x="8" y="9" width="40" height="6" fill="#23264a"/>
        <rect x="28" y="24" width="6" height="22" fill="#454464"/>
        <rect x="38" y="26" width="8" height="20" fill="#3a3a58"/>
        <rect x="14" y="22" width="3" height="28" fill="#3a2438"/>
        <rect x="82" y="12" width="16" height="42" fill="#2a2848"/>
        <rect x="-2" y="59" width="36" height="11" fill="#125685"/>
        <rect x="0" y="50" width="38" height="8" fill="#3c5a6a"/>
      </g>
      <g filter="url(#b1)">
        <circle cx="24" cy="19.5" r="4" fill="url(#lan)"/><circle cx="42" cy="19.5" r="4" fill="url(#lan)"/>
        <ellipse cx="9" cy="51" rx="6" ry="3" fill="#8a86b4"/><ellipse cx="22" cy="53" rx="6" ry="2.6" fill="#807cac"/><ellipse cx="33" cy="49.5" rx="4.5" ry="3" fill="#9088b8"/>
        <path d="M10 56h26v4h-26z" fill="#1f5a44"/>
        <!-- lotus + leaves bottom left -->
        <path d="M7 82c6-4 16-4 27 2v13h-27z" fill="#2c6a34"/>
        <ellipse cx="12" cy="78" rx="5.5" ry="5" fill="#d98cb4"/><ellipse cx="3" cy="93" rx="6" ry="6" fill="#dc8cbc"/><ellipse cx="23" cy="93" rx="6" ry="6" fill="#d890bc"/>
      </g>
      <!-- fence -->
      <g filter="url(#b05)" fill="#9c2c2e"><rect x="0" y="70" width="34" height="2.2"/><rect x="5.2" y="72" width="2" height="26"/><rect x="15.2" y="72" width="2" height="26"/><rect x="26" y="72" width="2.2" height="26"/></g>
      <!-- girl -->
      <g filter="url(#b1)">
        <!-- back hair -->
        <path d="M47 28c0-12 8-19 18-19c11 0 17 8 17 20c0 8 2 14 7 22l-14 3l-8-6z" fill="#2b1b24"/>
        <path d="M74 40c6 4 10 8 13 12l-16 2z" fill="#24161e"/>
        <!-- dress/body -->
        <path d="M33 62c2-8 10-12 18-11l12 3l10-4c10-2 20 2 24 10v40h-64z" fill="#c99aae"/>
        <path d="M76 52c8-3 18 0 21 8v20c-8-2-16-8-21-16z" fill="#d6aebe"/>
        <path d="M58 60c4 6 10 10 18 8c-2 8-4 14-10 18c-6-4-9-12-8-26z" fill="#b8828c"/>
        <path d="M35 88c14-4 40-6 62-2v14h-62z" fill="#d09cb4"/>
        <path d="M86 72c5 0 9 2 11 5v20h-14z" fill="#d698a8"/>
        <!-- neck -->
        <path d="M54 44l18 2l2 14l-16-2z" fill="#c89a98"/>
        <!-- face -->
        <ellipse cx="59.5" cy="37" rx="11.5" ry="12.5" fill="#e9c1ba" transform="rotate(-12 59.5 37)"/>
        <!-- fringe -->
        <path d="M46.5 32c-1-12 7-21 18.5-21c9 0 14 6 14 14l-1 14l-4.5-1l-.5-5c-9 .5-18-2-24.5-6z" fill="#2b1b24"/>
        <path d="M73 32c2 6 2 14-1 20l-3-2c2-6 3-12 1-17z" fill="#2b1b24"/>
        <path d="M48.5 20c-2.5 6-3 13-2 21l2.6-.5c-.8-7-.4-13 1.4-19z" fill="#2b1b24"/>
        <!-- hand + arm -->
        <path d="M41 40c2-4 6-5 9-3l3 8l5 6c1 4 0 8-2 12l-4 12l-12 4c-3-6-3-14 1-20l4-4c-3-4-5-10-4-15z" fill="#d6a09e"/>
        <path d="M36 78c6 0 14-2 20-6l2 6c-6 4-14 6-22 6z" fill="#c8a0ae"/>
      </g>
      <g filter="url(#b05)">
        <ellipse cx="52.5" cy="31.5" rx="2.4" ry="1.5" fill="#3a2024"/><ellipse cx="64.5" cy="35.5" rx="2.6" ry="1.5" fill="#3a2024"/>
        <ellipse cx="54.5" cy="45" rx="2.6" ry="1.3" fill="#d23a3a"/>
      </g>
      <!-- hair flowers -->
      <g filter="url(#b1)">
        <ellipse cx="55" cy="14" rx="7" ry="8.5" fill="#c6a0b6" transform="rotate(25 55 14)"/><ellipse cx="57" cy="9" rx="3.5" ry="2.5" fill="#e6d0dc"/>
        <ellipse cx="84" cy="24" rx="5.5" ry="10" fill="#cfaac0" transform="rotate(-15 84 24)"/><ellipse cx="80" cy="33" rx="4" ry="4" fill="#b890ac"/><ellipse cx="86" cy="19" rx="2.5" ry="3.5" fill="#ead6e0"/>
      </g>
    </g>
  </g>
  <!-- handles -->
  <rect x="560" y="301" width="10" height="10" fill="#3b96e3"/><rect x="563" y="304" width="4" height="4" fill="#fff"/><rect x="834" y="301" width="10" height="10" fill="#3b96e3"/><rect x="837" y="304" width="4" height="4" fill="#fff"/><rect x="1108" y="301" width="10" height="10" fill="#3b96e3"/><rect x="1111" y="304" width="4" height="4" fill="#fff"/><rect x="560" y="575" width="10" height="10" fill="#3b96e3"/><rect x="563" y="578" width="4" height="4" fill="#fff"/><rect x="1108" y="575" width="10" height="10" fill="#3b96e3"/><rect x="1111" y="578" width="4" height="4" fill="#fff"/><rect x="560" y="849" width="10" height="10" fill="#3b96e3"/><rect x="563" y="852" width="4" height="4" fill="#fff"/><rect x="834" y="849" width="10" height="10" fill="#3b96e3"/><rect x="837" y="852" width="4" height="4" fill="#fff"/><rect x="1108" y="849" width="10" height="10" fill="#3b96e3"/><rect x="1111" y="852" width="4" height="4" fill="#fff"/>
  <rect x="564.9" y="305.8" width="26.3" height="26.3" fill="#3b96e3" stroke="#1e2025" stroke-width="0.6"/>
  <g stroke="#fff" stroke-width="1.6"><path d="M571 318h14M578 311v14"/></g>
  <path d="M578 309.2l3.2 4h-6.4zM578 326.8l3.2-4h-6.4zM569.2 318l4-3.2v6.4zM586.8 318l-4-3.2v6.4z" fill="#fff"/>
  <path d="M578 311l7 7l-7 7l-7-7z" stroke="#fff" stroke-opacity="0.5" stroke-width="0.8"/>
</svg>
<div class="abs" style="left:341px;top:288px;font-size:19.36px;line-height:22px;color:#ff0000;white-space:nowrap">00:00:00</div>
<div class="abs" style="left:85px;top:52.3px;font-size:21px;line-height:30px;color:#ff0a0a;white-space:nowrap">可以通过直接点击前端界面选中CardPage或者是组件树选中CardPage后点击左右切换。</div>
</div>
<div id="cscroll" class="abs"><div class="abs" style="left:0;top:0;width:8px;height:624px;background:#484c56"></div></div>

<!-- ===== right panel ===== -->
<div id="rpanel" class="abs" style="overflow:hidden">
<div class="abs" style="left:0;top:0;width:246px;height:1px;background:#2c2f37"></div>
<div class="abs" style="left:0;top:1px;width:24.2px;height:24px;background:#007aff"></div>
<div class="abs" style="left:24.2px;top:1px;width:1.2px;height:836px;background:#2c2f37"></div>
<div class="abs" style="left:25px;top:35px;width:221px;height:1.2px;background:#2b2e36"></div>
<svg class="abs" style="left:0;top:0" width="25" height="100" viewBox="1331 142 25 100" fill="none">
  <circle cx="1343" cy="151.8" r="2.5" stroke="#dce6ff" stroke-width="1.1"/><path d="M1338.5 155.1l2.9 1.7v3.4l-2.9 1.7l-2.9-1.7v-3.4zM1347.3 155.1l2.9 1.7v3.4l-2.9 1.7l-2.9-1.7v-3.4z" fill="#d4e0fa"/>
  <rect x="1337.2" y="188.7" width="10.4" height="9.1" rx="0.8" fill="#8f8f8f"/><circle cx="1342.7" cy="187" r="2.4" fill="#8f8f8f"/><circle cx="1348.1" cy="192.7" r="2.3" fill="#8f8f8f"/><circle cx="1336.9" cy="192.9" r="1.6" fill="#343841"/><circle cx="1342.9" cy="198.1" r="1.8" fill="#343841"/>
  <path d="M1336.9 223h12.6v7.3h-12.6z" stroke="#8f8f8f" stroke-width="1.5"/><path d="M1337 226.2h12.4" stroke="#8f8f8f" stroke-width="1.5"/><path d="M1337.6 228.5h4.5" stroke="#8f8f8f" stroke-width="1.2"/><circle cx="1346.4" cy="231.3" r="3.8" fill="#8f8f8f" stroke="#343841" stroke-width="0.5"/><path d="M1346.4 230.8v2.7M1346.4 228.9v.9" stroke="#343841" stroke-width="1"/>
</svg>
<span class="abs" style="left:36px;top:10px;font-size:14px;letter-spacing:0.85px;color:#e2e2e2;white-space:nowrap">General</span>
<span class="abs rl" style="left:35.6px;top:45.7px;">Id</span>
<div class="abs in" style="left:35px;top:65px;width:122px;height:25px;"><span class="abs v" style="left:5.6px;top:5px">cardPage7</span></div>
<span class="abs rl" style="left:35.6px;top:104.8px;">Position</span>
<div class="abs gb" style="left:35px;top:124.6px;height:67px"></div>
<span class="abs rl" style="left:46.6px;top:136px;">X</span>
<div class="abs in" style="left:46px;top:154.8px;width:111px;height:25px;"><span class="abs v" style="left:5.6px;top:5px">0</span><span class="abs u" style="left:83.6px;top:4.5px">px</span><svg class="abs" style="left:98.5px;top:5.5px" width="9" height="14" viewBox="0 0 9 14"><path d="M0.6 5.4h7.2l-3.6-4.6zM0.6 9h7.2l-3.6 4.4z" fill="#7c7c7c"/></svg></div>
<span class="abs rl" style="left:167.6px;top:136px;">Y</span>
<div class="abs in" style="left:167px;top:154.8px;width:120px;height:25px;"><span class="abs v" style="left:5.6px;top:5px">0</span></div>
<span class="abs rl" style="left:35.6px;top:206.8px;">Size</span>
<div class="abs gb" style="left:35px;top:226.6px;height:67px"></div>
<span class="abs rl" style="left:46.6px;top:238px;">Width</span>
<div class="abs in" style="left:46px;top:256.8px;width:111px;height:25px;"><span class="abs v" style="left:5.6px;top:5px">454</span><span class="abs u" style="left:83.6px;top:4.5px">px</span><svg class="abs" style="left:98.5px;top:5.5px" width="9" height="14" viewBox="0 0 9 14"><path d="M0.6 5.4h7.2l-3.6-4.6zM0.6 9h7.2l-3.6 4.4z" fill="#7c7c7c"/></svg></div>
<span class="abs rl" style="left:167.6px;top:238px;">Height</span>
<div class="abs in" style="left:167px;top:256.8px;width:120px;height:25px;"><span class="abs v" style="left:5.6px;top:5px">454</span></div>
<span class="abs rl" style="left:35.6px;top:308.9px;">BackgroundCo...</span>
<div class="abs in" style="left:35px;top:328px;width:122px;height:24.6px;"><span class="abs v" style="left:5.6px;top:4.8px">#32af52</span><div class="abs" style="left:102px;top:3.8px;width:16.2px;height:16.4px;background:#32af52"></div></div>
<span class="abs rl" style="left:35.6px;top:367.8px;">GaussOption</span>
<div class="abs gb" style="left:35px;top:387.6px;height:67px"></div>
<span class="abs rl" style="left:46.6px;top:399px;">FullScreenSt...</span>
<div class="abs in" style="left:46px;top:418.8px;width:111px;height:23.5px;"><span class="abs v" style="left:5.6px;top:4.25px;color:#b2b2b2">false</span><svg class="abs" style="left:98.5px;top:10px" width="9" height="6" viewBox="0 0 9 6"><path d="M0.8 0.6h7.2l-3.6 4.2z" fill="#7c7c7c"/></svg></div>
<span class="abs rl" style="left:167.6px;top:399px;">GaussianBlur</span>
<div class="abs in" style="left:167px;top:417.8px;width:120px;height:25px;"><span class="abs v" style="left:5.6px;top:5px">0</span></div>
<span class="abs rl" style="left:35.6px;top:469.7px;">Border</span>
<div class="abs gb" style="left:35px;top:489.5px;height:126px"></div>
<span class="abs rl" style="left:46.6px;top:500.9px;">Width</span>
<div class="abs in" style="left:46px;top:519.7px;width:111px;height:25px;"><span class="abs v" style="left:5.6px;top:5px">0</span><span class="abs u" style="left:83.6px;top:4.5px">px</span><svg class="abs" style="left:98.5px;top:5.5px" width="9" height="14" viewBox="0 0 9 14"><path d="M0.6 5.4h7.2l-3.6-4.6zM0.6 9h7.2l-3.6 4.4z" fill="#7c7c7c"/></svg></div>
<span class="abs rl" style="left:167.6px;top:500.9px;">Color</span>
<div class="abs in" style="left:167px;top:519.7px;width:120px;height:25px;"><span class="abs v" style="left:5.6px;top:5px">#000000</span></div>
<span class="abs rl" style="left:46.6px;top:559.9px;">Radius</span>
<div class="abs in" style="left:46px;top:578.7px;width:111px;height:25px;"><span class="abs v" style="left:5.6px;top:5px">0</span><span class="abs u" style="left:83.6px;top:4.5px">px</span><svg class="abs" style="left:98.5px;top:5.5px" width="9" height="14" viewBox="0 0 9 14"><path d="M0.6 5.4h7.2l-3.6-4.6zM0.6 9h7.2l-3.6 4.4z" fill="#7c7c7c"/></svg></div>
<span class="abs rl" style="left:35.6px;top:630.7px;">Margin</span>
<div class="abs gb" style="left:35px;top:650.5px;height:126px"></div>
<span class="abs rl" style="left:46.6px;top:661.9px;">MarginTop</span>
<div class="abs in" style="left:46px;top:680.7px;width:111px;height:25px;"><span class="abs v" style="left:5.6px;top:5px">0</span><span class="abs u" style="left:83.6px;top:4.5px">px</span><svg class="abs" style="left:98.5px;top:5.5px" width="9" height="14" viewBox="0 0 9 14"><path d="M0.6 5.4h7.2l-3.6-4.6zM0.6 9h7.2l-3.6 4.4z" fill="#7c7c7c"/></svg></div>
<span class="abs rl" style="left:167.6px;top:661.9px;">MarginBottom</span>
<div class="abs in" style="left:167px;top:680.7px;width:120px;height:25px;"><span class="abs v" style="left:5.6px;top:5px">0</span></div>
<span class="abs rl" style="left:46.6px;top:720.9px;">MarginLeft</span>
<div class="abs in" style="left:46px;top:739.7px;width:111px;height:25px;"><span class="abs v" style="left:5.6px;top:5px">0</span><span class="abs u" style="left:83.6px;top:4.5px">px</span><svg class="abs" style="left:98.5px;top:5.5px" width="9" height="14" viewBox="0 0 9 14"><path d="M0.6 5.4h7.2l-3.6-4.6zM0.6 9h7.2l-3.6 4.4z" fill="#7c7c7c"/></svg></div>
<span class="abs rl" style="left:167.6px;top:720.9px;">MarginRight</span>
<div class="abs in" style="left:167px;top:739.7px;width:120px;height:25px;"><span class="abs v" style="left:5.6px;top:5px">0</span></div>
<span class="abs rl" style="left:35.6px;top:791.7px;">Padding</span>
<div class="abs gb" style="left:35px;top:811.5px;height:67px"></div>
<span class="abs rl" style="left:46.6px;top:822.9px;">PaddingTop</span>
<div class="abs in" style="left:46px;top:841.7px;width:111px;height:25px;"><span class="abs v" style="left:5.6px;top:5px">0</span><span class="abs u" style="left:83.6px;top:4.5px">px</span><svg class="abs" style="left:98.5px;top:5.5px" width="9" height="14" viewBox="0 0 9 14"><path d="M0.6 5.4h7.2l-3.6-4.6zM0.6 9h7.2l-3.6 4.4z" fill="#7c7c7c"/></svg></div>
<span class="abs rl" style="left:167.6px;top:822.9px;">PaddingBottom</span>
<div class="abs in" style="left:167px;top:841.7px;width:120px;height:25px;"><span class="abs v" style="left:5.6px;top:5px">0</span></div>
</div>
<!-- ===== annotation overlay ===== -->
<svg id="anno" class="abs" style="left:0;top:0;z-index:50;pointer-events:none" width="1577" height="979" viewBox="0 0 1577 979" fill="none">
  <rect x="944.3" y="110.3" width="63.4" height="39.4" stroke="#ff0000" stroke-width="4.3"/>
  <rect x="538.5" y="286.5" width="670" height="574" stroke="#ff0000" stroke-width="4.4"/>
  <rect x="74.9" y="748.5" width="172.7" height="28.8" stroke="#ff0000" stroke-width="4.2"/>
  <path d="M249.0 768.8L384.9 843.3" stroke="#ff0000" stroke-width="2.1"/><path d="M396.3 849.6L380.2 847.8L386.1 837.0Z" fill="#ff0000"/>
  <path d="M558.0 720.4L458.2 834.5" stroke="#ff0000" stroke-width="2.1"/><path d="M449.6 844.3L454.8 828.9L464.1 837.1Z" fill="#ff0000"/>
  <circle cx="976.3" cy="163.1" r="9.7" fill="#ff0000"/>
  <circle cx="427.3" cy="862.2" r="9.7" fill="#ff0000"/>
  <text x="976.3" y="167.5" font-size="12.5" fill="#fff" text-anchor="middle" font-family="Liberation Sans, sans-serif">2</text>
  <text x="427.3" y="866.6" font-size="12.5" fill="#fff" text-anchor="middle" font-family="Liberation Sans, sans-serif">1</text>
</svg>
</body>
</html>
